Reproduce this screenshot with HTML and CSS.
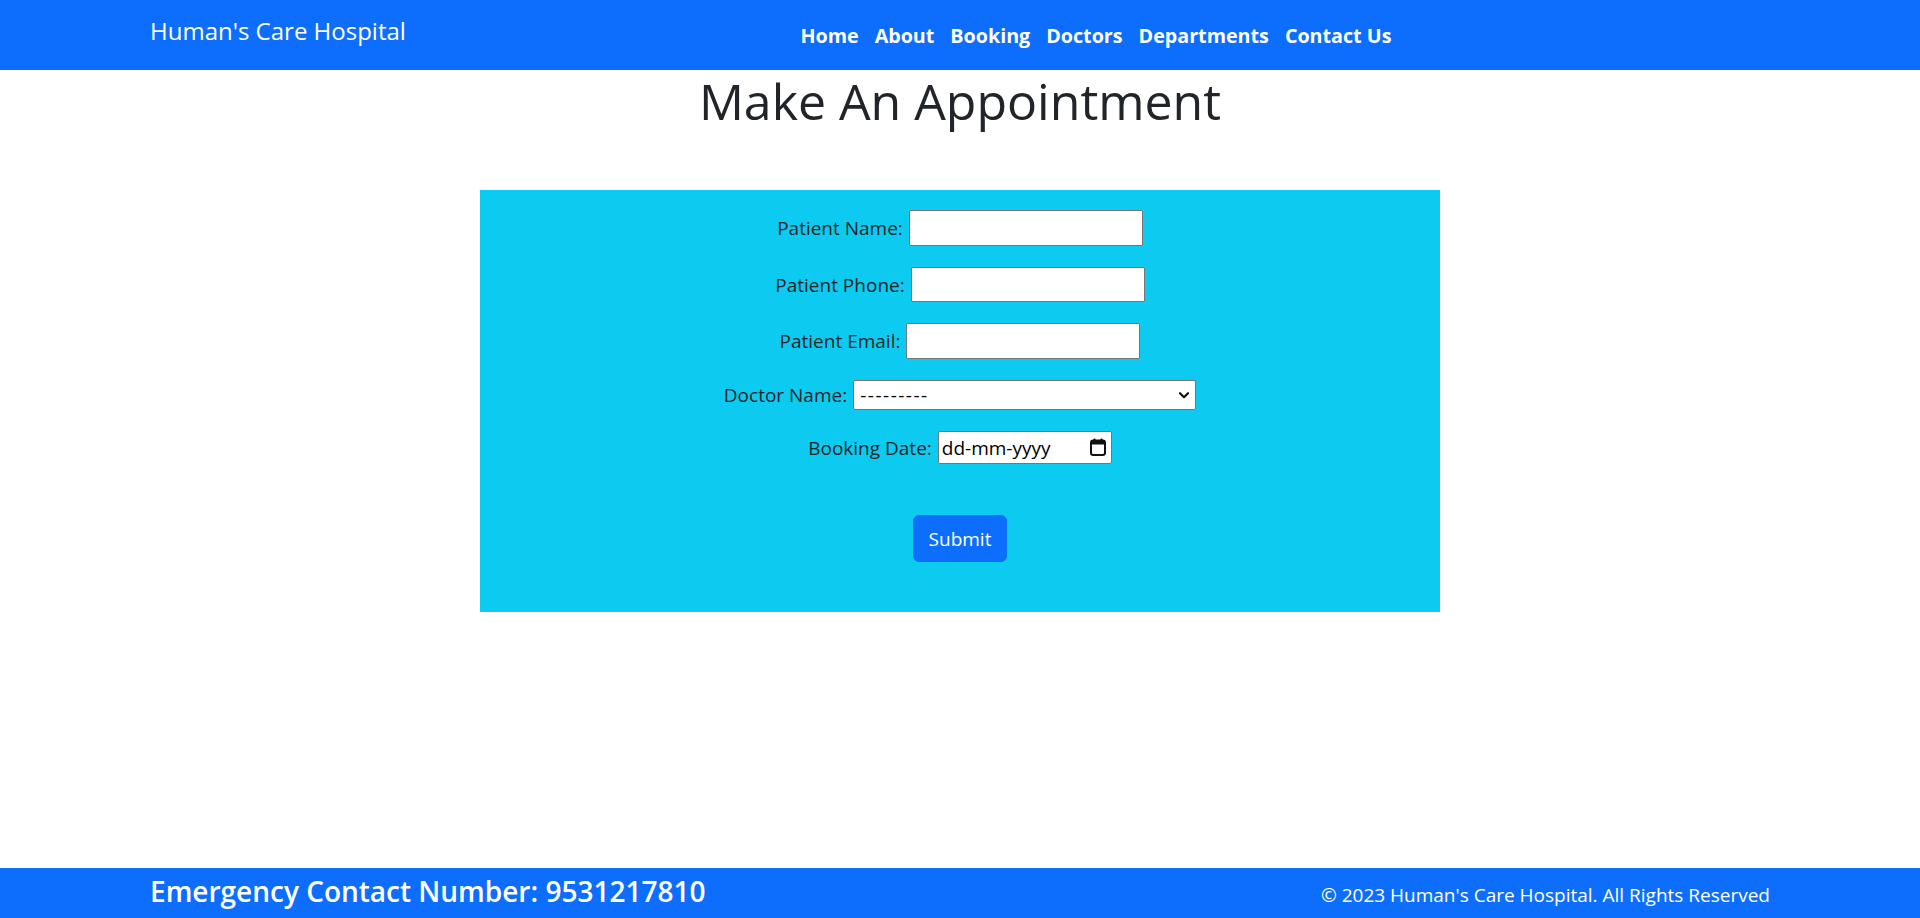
FILE: index.html
```html
<!DOCTYPE html>
<html lang="en">
<head>
<meta charset="utf-8">
<title>Booking - Human's Care Hospital</title>
<link rel="stylesheet" href="styles.css">
</head>
<body>
<nav class="navbar">
  <a class="brand" href="#">Human's Care Hospital</a>
  <ul class="nav-links">
    <li><a href="#">Home</a></li>
    <li><a href="#">About</a></li>
    <li><a href="#">Booking</a></li>
    <li><a href="#">Doctors</a></li>
    <li><a href="#">Departments</a></li>
    <li><a href="#">Contact Us</a></li>
  </ul>
</nav>
<main class="main">
  <h1 class="title">Make An Appointment</h1>
  <form class="booking-form">
    <div class="rows">
      <p class="row"><label for="name">Patient Name:</label><input type="text" id="name" class="in-name"></p>
      <p class="row"><label for="phone">Patient Phone:</label><input type="text" id="phone" class="in-phone"></p>
      <p class="row"><label for="email">Patient Email:</label><input type="email" id="email" class="in-email"></p>
      <p class="row"><label for="doc">Doctor Name:</label>
        <span class="select-wrap">
          <select id="doc" class="in-select"><option>---------</option></select>
          <svg class="chevron" width="10" height="7" viewBox="0 0 10 7" aria-hidden="true"><path d="M1 1.2 L5 5.2 L9 1.2" fill="none" stroke="#111" stroke-width="2.2" stroke-linecap="round" stroke-linejoin="round"/></svg>
        </span>
      </p>
      <p class="row"><label for="date">Booking Date:</label>
        <span class="date-wrap">
          <input type="text" id="date" class="in-date" placeholder="dd-mm-yyyy">
          <svg class="cal-icon" width="16" height="18" viewBox="0 0 16 18" aria-hidden="true">
            <rect x="1" y="2.5" width="14" height="14.5" rx="2.2" fill="none" stroke="#111" stroke-width="2"/>
            <rect x="1" y="2.5" width="14" height="4" fill="#111"/>
            <rect x="3.5" y="0.5" width="2" height="3" rx="0.8" fill="#111"/>
            <rect x="10.5" y="0.5" width="2" height="3" rx="0.8" fill="#111"/>
          </svg>
        </span>
      </p>
    </div>
    <div class="actions"><button type="submit" class="btn">Submit</button></div>
  </form>
</main>
<footer class="footer">
  <h3 class="emergency">Emergency Contact Number: 9531217810</h3>
  <p class="copy">© 2023 Human's Care Hospital. All Rights Reserved</p>
</footer>
</body>
</html>
```

FILE: styles.css
```css
* { box-sizing: border-box; }
html, body { margin: 0; padding: 0; }
body {
  font-family: "Open Sans", "Noto Sans", sans-serif;
  color: #212529;
  font-size: 16px;
  min-height: 100vh;
  display: flex;
  flex-direction: column;
  background: #fff;
}
.navbar {
  height: 70px;
  background: #0d6efd;
  display: flex;
  align-items: flex-start;
  padding: 0 150px;
}
.brand {
  color: #fff;
  text-decoration: none;
  font-size: 24px;
  line-height: 36px;
  margin-top: 13px;
  margin-right: 16px;
  white-space: nowrap;
}
.nav-links {
  flex: 1;
  display: flex;
  justify-content: center;
  list-style: none;
  margin: 21px 0 0;
  padding: 0;
}
.nav-links a {
  display: block;
  padding: 0 8px;
  color: #fff;
  text-decoration: none;
  font-weight: 700;
  font-size: 19.7px;
  line-height: 30px;
}
.main { flex: 1; }
.title {
  margin: 6px 0 0;
  text-align: center;
  font-size: 50px;
  font-weight: 500;
  line-height: 1;
  color: #212529;
}
.booking-form {
  width: 960px;
  margin: 64px auto 0;
  background: #0dcaf0;
  padding: 20px 0 50px;
}
.rows {
  display: flex;
  flex-direction: column;
  gap: 21px;
}
.row {
  margin: 0;
  display: flex;
  justify-content: center;
  align-items: center;
  gap: 6px;
  font-size: 19px;
  line-height: 30px;
}
.row input, .row select {
  font-family: inherit;
  font-size: 19px;
  margin: 0;
  color: #000;
}
.in-name { width: 234px; height: 36px; }
.in-phone { width: 234px; height: 35px; }
.in-email { width: 234px; height: 36px; }
.select-wrap, .date-wrap {
  position: relative;
  display: inline-flex;
}
.in-select {
  -webkit-appearance: none;
  appearance: none;
  width: 343px;
  height: 30px;
  padding: 0 24px 0 6px;
  background: #fff;
  border: 1px solid #767676;
  border-radius: 2px;
  letter-spacing: 1.5px;
  line-height: 28px;
}
.chevron {
  position: absolute;
  right: 7px;
  top: 12px;
  pointer-events: none;
}
.in-date {
  width: 174px;
  height: 33px;
  padding: 0 28px 0 3px;
  border: 1px solid #767676;
  border-radius: 2px;
  background: #fff;
}
.in-date::placeholder { color: #000; opacity: 1; }
.cal-icon {
  position: absolute;
  right: 6px;
  top: 7px;
  pointer-events: none;
}
.actions {
  display: flex;
  justify-content: center;
  margin-top: 51px;
}
.btn {
  width: 94px;
  height: 47px;
  background: #0d6efd;
  color: #fff;
  border: 1px solid #0d6efd;
  border-radius: 6px;
  font-family: inherit;
  font-size: 19px;
  padding: 0;
}
.footer {
  height: 50px;
  background: #0d6efd;
  color: #fff;
  display: flex;
  justify-content: space-between;
  align-items: baseline;
  padding: 0 150px;
}
.emergency {
  margin: 0;
  font-size: 28px;
  font-weight: 600;
  line-height: 1.2;
  padding-top: 7px;
}
.copy {
  margin: 0;
  font-size: 19px;
  line-height: 1.5;
}
```
